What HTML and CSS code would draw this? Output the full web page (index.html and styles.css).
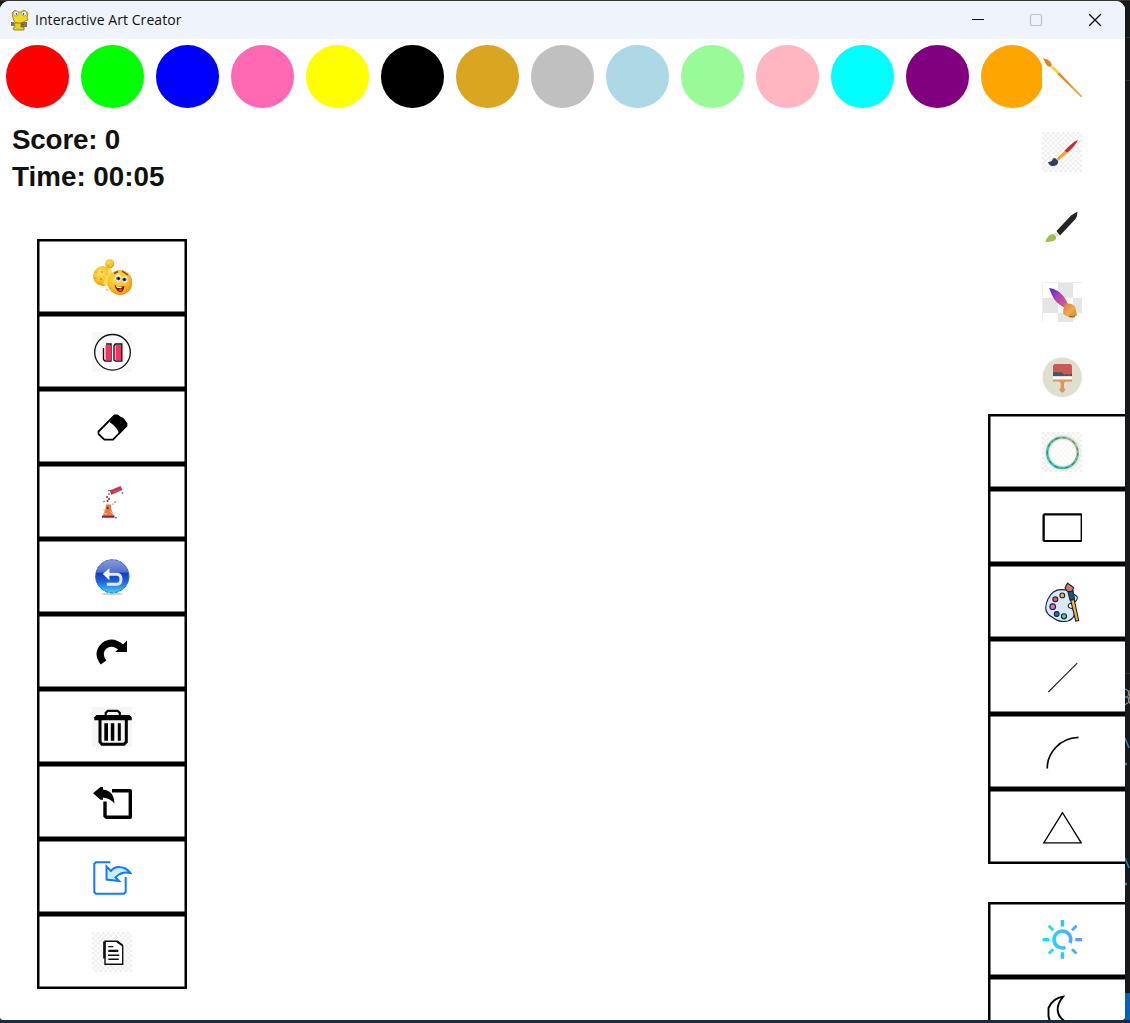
FILE: index.html
```html
<!DOCTYPE html>
<html lang="en">
<head>
<meta charset="utf-8">
<title>Interactive Art Creator</title>
<link rel="stylesheet" href="styles.css">
</head>
<body>
<svg class="defs" width="0" height="0" aria-hidden="true">
  <defs>
    <pattern id="check" width="5" height="5" patternUnits="userSpaceOnUse"><rect width="5" height="5" fill="#fff"/><rect width="2.5" height="2.5" fill="#efefef"/><rect x="2.5" y="2.5" width="2.5" height="2.5" fill="#efefef"/></pattern>
    <radialGradient id="gold" cx=".4" cy=".35" r=".7"><stop offset="0" stop-color="#ffe45c"/><stop offset=".6" stop-color="#fdbb24"/><stop offset="1" stop-color="#ee8d1c"/></radialGradient>
    <linearGradient id="orb" x2="0" y2="1"><stop offset="0" stop-color="#8c9cdd"/><stop offset=".36" stop-color="#5672cf"/><stop offset=".42" stop-color="#123dc4"/><stop offset=".65" stop-color="#1a62dc"/><stop offset="1" stop-color="#43d4ff"/></linearGradient>
    <linearGradient id="sky" gradientUnits="userSpaceOnUse" x1="0" y1="20" x2="40" y2="20"><stop offset="0" stop-color="#00f0ff"/><stop offset=".5" stop-color="#3dbdff"/><stop offset="1" stop-color="#5899ff"/></linearGradient>
    <linearGradient id="violet" x2="1" y2="1"><stop offset="0" stop-color="#4a20dc"/><stop offset=".45" stop-color="#ac45b5"/><stop offset="1" stop-color="#e8646d"/></linearGradient>
    <linearGradient id="amber" x2="1" y2="1"><stop offset="0" stop-color="#d9773e"/><stop offset=".55" stop-color="#eaae50"/><stop offset="1" stop-color="#c8801e"/></linearGradient>
    <linearGradient id="teal" x1="1" y1="0" x2="0" y2="1"><stop offset="0" stop-color="#c5c9a0"/><stop offset=".4" stop-color="#68b5a4"/><stop offset="1" stop-color="#1fc9ce"/></linearGradient>
  </defs>
</svg>
<div class="window">
  <header class="titlebar">
    <svg class="app-icon" viewBox="0 0 20 22">
      <path d="M3 9 2 4 5 1 8 3 11 3 14 1 18 4 17 9 18 11 13 13 12 15 6 14 4 12z" fill="#f2da22" stroke="#8d7b13" stroke-width=".8"/>
      <circle cx="6" cy="4.5" r="2.5" fill="#fff" stroke="#777" stroke-width=".6"/><circle cx="14" cy="4.5" r="2.5" fill="#fff" stroke="#777" stroke-width=".6"/>
      <circle cx="6.5" cy="5" r=".8"/><circle cx="13.5" cy="5" r=".8"/>
      <path d="M1 13h3v4H1zM11 13h6v5h-6z" fill="#777"/><path d="M4 14h7v4h3v3H4l-1-2 2-1z" fill="#e6cf1e" stroke="#806f13" stroke-width=".8"/><path d="M12 15h2v1h-2z" fill="#c33"/>
    </svg>
    <h1 class="title">Interactive Art Creator</h1>
    <svg class="controls" viewBox="0 0 140 38" fill="none">
      <path d="M2 18.5h12" stroke="#111" stroke-width="1.2"/>
      <rect x="60.5" y="13.5" width="11" height="11" rx="1.3" stroke="#bfc0c5" stroke-width="1.2"/>
      <path d="M119.2 13.2l11.6 11.6M130.8 13.2l-11.6 11.6" stroke="#111" stroke-width="1.3"/>
    </svg>
  </header>
  <main class="stage">
    <div class="palette">
      <i class="swatch red"></i><i class="swatch green"></i><i class="swatch blue"></i><i class="swatch hotpink"></i><i class="swatch yellow"></i><i class="swatch black"></i><i class="swatch goldenrod"></i><i class="swatch silver"></i><i class="swatch lightblue"></i><i class="swatch palegreen"></i><i class="swatch lightpink"></i><i class="swatch cyan"></i><i class="swatch purple"></i><i class="swatch orange"></i>
    </div>
    <section class="left">
      <div class="status"><p class="score">Score: 0</p><p>Time: 00:05</p></div>
      <div class="actions">
        <div class="tool boxed"><svg class="icon" viewBox="0 0 40 40">
          <circle cx="17.7" cy="6.8" r="4.6" fill="url(#gold)"/><circle cx="11" cy="19" r="10" fill="url(#gold)"/><path d="M17 11l3 4-4 14-5-2z" fill="#ffd95e"/><circle cx="28" cy="25.5" r="12.5" fill="url(#gold)"/>
          <g fill="#c1661c"><circle cx="10" cy="15" r=".8"/><circle cx="4" cy="15" r=".6"/><circle cx="9" cy="22" r=".8"/><circle cx="3" cy="21" r=".6"/><circle cx="16" cy="8" r=".6"/><circle cx="15" cy="33" r=".7"/><circle cx="15" cy="17" r=".6"/></g>
          <path d="M22 16.5l4-2M30 14l6 4" stroke="#894212" stroke-width="1.4"/>
          <ellipse cx="26" cy="21" rx="2.7" ry="3.6" fill="#fff"/><ellipse cx="33" cy="22.5" rx="2.5" ry="3.2" fill="#fff"/><circle cx="26.3" cy="21.5" r="2.1" fill="#2d65aa"/><circle cx="32.5" cy="22.5" r="2.1" fill="#2d65aa"/><circle cx="26.5" cy="21.5" r="1"/><circle cx="32.3" cy="22.5" r="1"/>
          <path d="M22.5 28q5 3 10 1-1 6-4.5 6-4-1-5.5-7z" fill="#6b160f"/><path d="M24 29l6 1.3-1 1-4-.6z" fill="#fff"/><path d="M26 33q3-2 4.5 0-2 2-4.500 0z" fill="#f2424d"/>
        </svg></div>
        <div class="tool boxed"><svg class="icon" viewBox="0 0 40 40"><rect width="40" height="40" fill="#f8f8f8"/><circle cx="20.5" cy="20.3" r="17.8" fill="#fbfbfb" stroke="#111" stroke-width="1.3"/><path d="M11.5 16v11.5l1.5 1.5h6V12h-5M22 14v14l1.5 1h6.3V12h-6.5z" fill="#fff" stroke="#111" stroke-width="1.4"/><path d="M13.5 13h5.5v15.500h-5.500zM23.5 13H29v15.500h-5.500z" fill="#ff2d62"/></svg></div>
        <div class="tool boxed"><svg class="icon" viewBox="0 0 40 40"><path d="M6.5 24.5 22.5 8.5h2.7l3 2 2.5 1 3.8 5v2.3L21 32.7h-8.6L6.5 27z" fill="#fff" stroke="#000" stroke-width="1.8" stroke-linejoin="round"/><path d="M17.5 15 23.5 8h2.5l3 2.7 2 .7 4 5v2.500l-8 8q-1-6-9.500-11.900z"/></svg></div>
        <div class="tool boxed"><svg class="icon" viewBox="0 0 40 40"><path d="M18.5 10.700 29.500 6" stroke="#bd3858" stroke-width="4.600"/><path d="M21 10l7-2.500" stroke="#df6d7e" stroke-width="1" stroke-dasharray="1.5 1"/><path d="M14 22.500h5v4l3 8H10.500l3-8z" fill="#ef7945"/><path d="M11 28l4-2M18 29l3 3M12 31l3 1" stroke="#ffc095" stroke-width="1"/><path d="M10 34.700h12.500" stroke="#7d2443" stroke-width="2"/><g fill="#71233e"><circle cx="17" cy="8.5" r=".8"/><circle cx="17" cy="12" r=".8"/><circle cx="15" cy="15" r=".9"/><circle cx="17" cy="17" r="1"/><circle cx="15.5" cy="19" r="1"/><circle cx="12" cy="19.5" r=".7"/><circle cx="23" cy="20" r=".7"/><circle cx="30.5" cy="11" r=".8"/><circle cx="24" cy="35.7" r=".8"/><circle cx="15.5" cy="26" r="1.2"/><circle cx="21" cy="22" r=".6"/></g></svg></div>
        <div class="tool boxed"><svg class="icon" viewBox="0 0 40 40"><ellipse cx="20.3" cy="36.8" rx="11" ry="1.2" fill="#ccd1d5"/><circle cx="20.3" cy="19.3" r="17" fill="url(#orb)"/><circle cx="20.3" cy="19.3" r="16.5" fill="none" stroke="#2879bd" stroke-width="1" stroke-dasharray="3 2"/><path d="M15 17.300h10q4 .3 4 5t-4 4.900H14.800" fill="none" stroke="#e7e9f2" stroke-width="3"/><path d="M10.800 17 17.400 11.200v12z" fill="#fff"/></svg></div>
        <div class="tool boxed"><svg class="icon" viewBox="0 0 40 40"><path d="M11.500 30.500Q4.500 21 12 14q8-6.500 17.500 1.700" fill="none" stroke="#000" stroke-width="7"/><path d="M35 8.500V20H23.300z"/></svg></div>
        <div class="tool boxed"><svg class="icon" viewBox="0 0 40 40"><rect width="40" height="40" fill="#f6f6f6"/><path d="M13.700 9V6l2-2.200h10L27.800 6v3" fill="none" stroke="#000" stroke-width="2.200"/><path d="M4.500 8h33l2.200 2.200v3H2.300v-3z"/><path d="M8 12.500V35l2 2.300h22l2.300-2.300V12.500" fill="none" stroke="#000" stroke-width="3"/><path d="M12.300 16.200H16v17.600h-3.700zM18.800 16.200h3.500v17.600h-3.500zM25.800 16.200h3v17.600h-3z"/></svg></div>
        <div class="tool boxed"><svg class="icon" viewBox="0 0 40 40"><path d="M20 8.800h18.300v26.400H14.300L13 34V19.500" fill="none" stroke="#000" stroke-width="3.400" stroke-linejoin="round"/><path d="M1 11.300 8.500 5H11v2.500Q22 8.500 22.500 21.500q-4-5-11.500-6v2.200H8.500z"/></svg></div>
        <div class="tool boxed"><svg class="icon" viewBox="0 0 40 40" stroke="#1679fb"><path d="M18.300 5.200H4L2.300 7v28L4 36.700h28l1.700-1.700V20" fill="none" stroke-width="2"/><path d="M14.500 9.500v13l12.500 1.500-3.500-3.500q6-6.500 15-4.500-4.500-6-12-6-4.500 0-7.500 4z" fill="#ccecff" stroke-width="2"/></svg></div>
        <div class="tool boxed"><svg class="icon" viewBox="0 0 40 40"><rect width="40" height="40" fill="url(#check)"/><path d="M13 9.300h12.500l5.200 4.200v18.700H13z" fill="#fff" stroke="#111" stroke-width="1.400"/><path d="M12.300 9.500v17" stroke="#111" stroke-width="2.300"/><path d="M25 9.500l5.500 4" stroke="#111" stroke-width="2"/><path d="M16.300 14.600h5M16 23.200h11.300M16.300 27.300h10.500" stroke="#111" stroke-width="1.400"/><path d="M16.300 18.800h10" stroke="#111" stroke-width="2.200"/></svg></div>
      </div>
    </section>
    <aside class="right">
      <div class="tool"><svg class="icon opaque" viewBox="0 0 40 40"><path d="M1 1.300q5 .7 7.500 3.500 2 2.500 1 5-4 .5-6-3.500z" fill="#e58219"/><path d="M10 9.700l6.500 6.600" stroke="#f3d32b" stroke-width="2.700"/><path d="M15.300 17.300 17.300 15.300 40 39.300l-.7.7z" fill="#e48d22"/><path d="M29 29l10.500 10.500" stroke="#eda63c" stroke-width="1.200"/></svg></div>
      <div class="tool"><svg class="icon" viewBox="0 0 40 40"><rect width="40" height="40" fill="url(#check)"/><path d="M6 30q4 0 5-3.500l2-.5 3.300 3q0 5-6 5-3 0-4.300-4z" fill="#2f4356"/><path d="M14.500 26.500 23 18.500l2.500 2.500-9 7.500z" fill="#f3a236"/><path d="M22.500 18.800Q31 9.500 36 8q-2 5-10.500 12.700z" fill="#c92e2d"/></svg></div>
      <div class="tool"><svg class="icon" viewBox="0 0 40 40"><path d="M3.500 35q2-8 8-8 3 1.500 2.500 5-2 3-10.500 3z" fill="#9fbd50"/><path d="M12.500 26l3.500 3.200" stroke="#ddd" stroke-width="2"/><path d="M14.500 24 29 8.500 35.500 4.500q0 4.500-2 7.500L18 28.500z" fill="#242326"/></svg></div>
      <div class="tool"><svg class="icon" viewBox="0 0 40 40"><path d="M16 0h15v16h9v15h-9v9H16v-9H1V16h15zM16 16v15h15V16z" fill="#e5e5e5" fill-rule="evenodd"/><path d="M0 .5h40M.5 0v40" stroke="#eee"/><path d="M7 6l4 .700Q20 10 24.500 19l1.500 4-3 3q-10-5-13-13z" fill="url(#violet)"/><path d="M22.500 22.500q7-3 11 3 .5 5 1.500 7.500-2 2.500-7 2-7-1-7-5z" fill="url(#amber)"/><path d="M27 34.700q4 .7 6 0" stroke="#9f5a17"/></svg></div>
      <div class="tool"><svg class="icon" viewBox="0 0 40 40"><circle cx="20.2" cy="20.2" r="19.7" fill="#dedfce"/><path d="M11 15h19v4.500H11z" fill="#465469"/><path d="M12.500 7h16L30 8.500V17h-2l-1 2-1-2h-2l-1 1.300L20 15.300h-9v-6.800z" fill="#c85b58"/><path d="M11 19.300h19v3.300H11z" fill="#fff"/><path d="M11 22.600h19v2h-7l-1 2v4l1.300 2.500-2 2.400h-2l-2-2.400 1.400-2.500v-4l-1-2H11z" fill="#dd955b"/></svg></div>
      <div class="tool boxed"><svg class="icon" viewBox="0 0 40 40"><rect width="40" height="40" fill="url(#check)"/><circle cx="20.7" cy="20.8" r="14" fill="#fdfdfc" fill-opacity=".6"/><circle cx="21" cy="20.8" r="15.500" fill="none" stroke="#f0ead9" stroke-width="5.500"/><circle cx="20.500" cy="20.800" r="15.300" fill="none" stroke="url(#teal)" stroke-width="2.500"/><circle cx="20.500" cy="20.800" r="15.300" fill="none" stroke="#24706c" stroke-opacity=".65" stroke-width="1.200" stroke-dasharray="3 3 1 3 4 4"/></svg></div>
      <div class="tool boxed"><svg class="icon" viewBox="0 0 40 40" fill="none" stroke="#000"><path d="M1.300 34.300V8l1-.7h37V34H2.300" stroke-width="1.400"/><path d="M1.800 8v26M1.500 7.400h38M1.500 34h38" stroke-width="2"/></svg></div>
      <div class="tool boxed"><svg class="icon" viewBox="0 0 40 40" stroke="#172436" stroke-width="1.100"><path d="M27 9Q12 4 6 17T10 35q7 6 16 4 8-3 6-10-1-3-4-3-3-1-1-4 4-1 7-3 3-4-1-6z" fill="#d9e9fb"/><circle cx="13.300" cy="17.300" r="2.500" fill="#ed5253"/><circle cx="20.300" cy="13.400" r="2.400" fill="#efb143"/><circle cx="10.700" cy="24.700" r="2.800" fill="#f369b4"/><circle cx="14.700" cy="32" r="2.400" fill="#286fc4"/><circle cx="22" cy="34.300" r="2.600" fill="#69be8e"/><path d="M25.500 9.500 23 6l2.500-5 6 4.500-1 4z" fill="#d47b51"/><path d="M26 10l5-1 1.500 8-4.500 1z" fill="#24547c"/><path d="M28.700 18.300l3.500-.8 4.500 21-3 .5z" fill="#f3b63b"/></svg></div>
      <div class="tool boxed"><svg class="icon" viewBox="0 0 40 40"><path d="M6.300 35 35.200 6.100" stroke="#222" stroke-width="1.100"/></svg></div>
      <div class="tool boxed"><svg class="icon" viewBox="0 0 40 40" fill="none" stroke="#000"><path d="M5.300 36.500Q5 25 13.700 15.500 22 6 36.500 5.300" stroke-width="1.700"/></svg></div>
      <div class="tool boxed"><svg class="icon" viewBox="0 0 40 40"><path d="M20.500 5.700 1.800 35.800h37.400z" fill="none" stroke="#000" stroke-width="1.300"/></svg></div>
      <div class="tool boxed theme"><svg class="icon" viewBox="0 0 40 40" fill="none" stroke="url(#sky)" stroke-width="3.500"><path d="M23.500 28.300A8.400 8.400 0 1 1 28 24"/><path d="M18.700 1h3.500v6.500h-3.500zM18.700 33.300h3.500v6.400h-3.500z" fill="#3dbdff" stroke="none"/><path d="M.7 19h6.600v3.300H.7z" fill="#00e5ff" stroke="none"/><path d="M33.300 19H40v3.300h-6.700z" fill="#58a0ff" stroke="none"/><path d="M6.700 6.700l4.600 4.600M30 11.300l4.500-4.600M6.700 34.500l4.600-4.300M30 30.200l4.500 4.300" stroke-width="2.800"/></svg></div>
      <div class="tool boxed"><svg class="icon" viewBox="0 0 40 40"><path d="M21 2.800Q11 4 6.500 14v8q2 12 13.500 15 9 1 15-7-14 0-18.500-10-3-8 4.500-17.200z" fill="none" stroke="#000" stroke-width="1.900"/></svg></div>
    </aside>
  </main>
</div>
<svg class="behind" viewBox="0 0 5 1023" fill="none">
  <path d="M0 37.500h5M0 80.500h5M0 673.500h5" stroke="#303234"/>
  <path d="M0 689l3 1.500 2 6-2 6.500-3 1.500M0 697h3" stroke="#82b6d8"/><path d="M5 690q-4 6 0 14" stroke="#d68a47"/>
  <path d="M0 738l4 10M0 858l4 10" stroke="#178dca" stroke-width="1.500"/><path d="M0 764h2M0 884h2" stroke="#139aa4" stroke-width="2.500"/>
  <path d="M0 993h5v27H0z" fill="#0063b1"/>
</svg>
</body>
</html>
```
FILE: styles.css
```css
* { box-sizing: border-box; }
body {
  margin: 0;
  width: 1130px;
  height: 1023px;
  padding-top: 1px;
  display: flex;
  overflow: hidden;
  background: linear-gradient(#333 0 1px, #17191b 1px 1020px, #1b2b3d 1020px);
}
.defs { position: absolute; }
.window {
  width: 1125px;
  height: 1019px;
  flex: none;
  overflow: hidden;
  border-radius: 9px 9px 3px 3px;
  background: #fff;
}
.behind { width: 5px; height: 1023px; margin-top: -1px; flex: none; }
.titlebar {
  height: 38px;
  padding-left: 10px;
  display: flex;
  align-items: center;
  background: #eff3fb;
}
.app-icon { width: 20px; height: 22px; }
.title {
  margin: 0 auto 0 5px;
  font: 400 14px/38px "Open Sans", sans-serif;
  letter-spacing: 0.06px;
  color: #111;
}
.controls { width: 140px; height: 38px; margin-right: 15px; }
.stage {
  height: 981px;
  display: grid;
  grid-template: 75px 906px / 987.5px 150px;
}
.palette {
  grid-area: 1 / 1 / 2 / 3;
  display: flex;
  gap: 12.5px;
  padding: 6.25px;
}
.swatch { width: 62.5px; height: 62.5px; flex: none; border-radius: 50%; }
.red { background: #f00; }
.green { background: #0f0; }
.blue { background: #00f; }
.hotpink { background: #ff69b4; }
.yellow { background: #ff0; }
.black { background: #000; }
.goldenrod { background: #daa520; }
.silver { background: #c0c0c0; }
.lightblue { background: #add8e6; }
.palegreen { background: #98fb98; }
.lightpink { background: #ffb6c1; }
.cyan { background: #0ff; }
.purple { background: #800080; }
.orange { background: #ffa500; }
.left { grid-area: 2 / 1; }
.status {
  height: 125px;
  padding: 7px 12px;
  font: 700 27.8px/37px "Liberation Sans", Arial, sans-serif;
  color: #111;
}
.status p { margin: 0; }
.status .score { letter-spacing: -0.2px; }
.actions { width: 150px; margin-left: 37.4px; }
.right { grid-area: 1 / 2 / 3 / 3; z-index: 1; }
.tool {
  width: 150px;
  height: 75px;
  display: flex;
  align-items: center;
  justify-content: center;
}
.boxed { box-shadow: inset 0 0 0 2.5px #000; }
.theme { margin-top: 37.7px; }
.icon { width: 40px; height: 40px; margin-right: 1px; }
.opaque { background: #fff; }
```
